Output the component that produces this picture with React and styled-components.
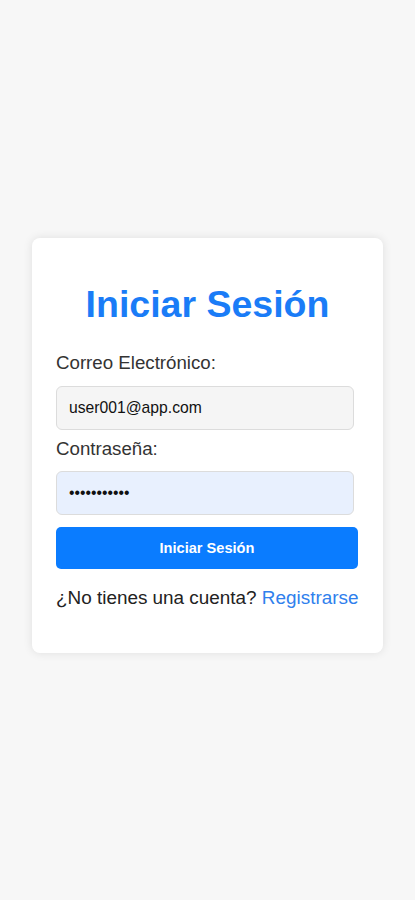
import React from 'react';
import styled, { createGlobalStyle } from 'styled-components';

const GlobalStyle = createGlobalStyle`
  html, body {
    margin: 0;
    padding: 0;
    background: #f7f7f7;
    font-family: "Liberation Sans", Arial, sans-serif;
  }
  * {
    box-sizing: border-box;
  }
`;

const Page = styled.div`
  min-height: 100vh;
  display: flex;
  align-items: center;
  justify-content: center;
  padding-bottom: 9px;
`;

const Card = styled.form`
  width: 351px;
  background: #fff;
  border-radius: 8px;
  box-shadow: 0 0 10px rgba(0, 0, 0, 0.1);
  padding: 45px 24px 44px;
  display: flex;
  flex-direction: column;
`;

const Title = styled.h1`
  margin: 0 0 26px;
  text-align: center;
  color: #1a7cf7;
  font-size: 37.5px;
  font-weight: bold;
  line-height: 43px;
`;

const Label = styled.label`
  display: block;
  color: #333;
  font-size: 18.7px;
  line-height: 21.5px;
  margin-bottom: 12px;
`;

const Input = styled.input`
  display: block;
  width: 298px;
  height: 44px;
  padding: 0 12px;
  margin-bottom: ${(p) => p.$gap}px;
  border: 1px solid #dcdcdc;
  border-radius: 6px;
  background: ${(p) => (p.$filled ? '#e8f0fe' : '#f5f5f5')};
  color: #111;
  font-family: "Liberation Sans", Arial, sans-serif;
  font-size: 15.7px;
  outline: none;
`;

const Button = styled.button`
  width: 302px;
  height: 42px;
  border: none;
  border-radius: 5px;
  background: #0a7cff;
  color: #fff;
  font-family: "Liberation Sans", Arial, sans-serif;
  font-size: 14.6px;
  font-weight: bold;
  cursor: pointer;
  margin-bottom: 18px;
`;

const Footer = styled.p`
  margin: 0;
  color: #222;
  font-size: 18.9px;
  line-height: 22px;
  white-space: nowrap;
`;

const Link = styled.a`
  color: #2f80ed;
  text-decoration: none;
`;

export default function App() {
  return (
    <>
      <GlobalStyle />
      <Page>
        <Card onSubmit={(e) => e.preventDefault()}>
          <Title>Iniciar Sesión</Title>
          <Label htmlFor="email">Correo Electrónico:</Label>
          <Input id="email" type="email" defaultValue="user001@app.com" $gap={8} />
          <Label htmlFor="password">Contraseña:</Label>
          <Input id="password" type="password" defaultValue="password001" $filled $gap={12} />
          <Button type="submit">Iniciar Sesión</Button>
          <Footer>
            ¿No tienes una cuenta? <Link href="#">Registrarse</Link>
          </Footer>
        </Card>
      </Page>
    </>
  );
}
